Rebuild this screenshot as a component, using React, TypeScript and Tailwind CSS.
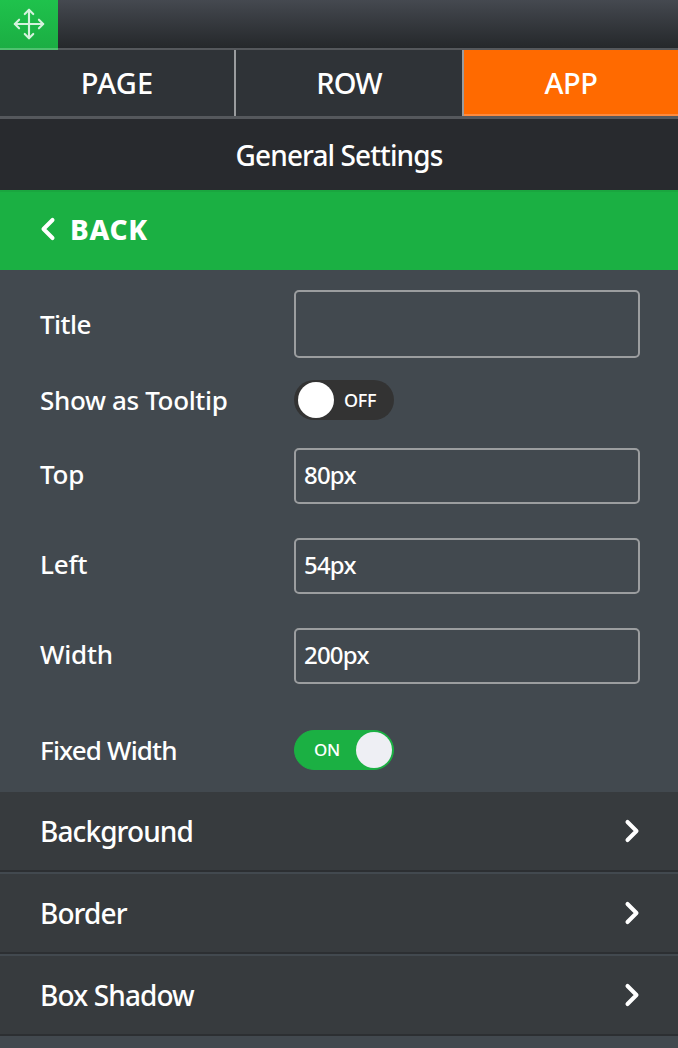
import { ChevronLeft, ChevronRight, Move } from "lucide-react";

const font = "font-['Noto_Sans','Liberation_Sans',sans-serif]";

function Label({ children, className = "tracking-[-0.55px]" }: { children: string; className?: string }) {
  return <div className={`w-[254px] text-[26px] leading-none font-medium text-white ${className}`}>{children}</div>;
}

function Field({ label, value, className }: { label: string; value: string; className: string }) {
  return (
    <div className={`flex items-center ${className}`}>
      <Label className="pb-[4px] tracking-[-0.2px]">{label}</Label>
      <input
        readOnly
        value={value}
        className="h-[56px] w-[346px] rounded-[5px] border-2 border-[#9b9d9f] bg-transparent px-[8px] pb-[3px] text-[24px] font-medium tracking-[-0.8px] text-white outline-none"
      />
    </div>
  );
}

function Row({ label }: { label: string }) {
  return (
    <div className="mb-[2px] flex h-[80px] items-center justify-between border-b-2 border-b-[#2c2f32] bg-[#373b3e] pr-[28px] pl-[40px]">
      <span className="text-[28px] font-medium tracking-[-0.9px] text-white">{label}</span>
      <ChevronRight size={36} strokeWidth={2.7} className="text-white" />
    </div>
  );
}

export default function App() {
  return (
    <div className={`flex h-[1048px] w-[678px] flex-col overflow-hidden bg-[#42494f] ${font}`}>
      {/* top bar */}
      <div className="h-[50px] border-b-2 border-b-[#55585c] bg-gradient-to-b from-[#454950] to-[#25282b]">
        <div className="flex h-[50px] w-[58px] items-center justify-center border-b-2 border-b-[#4fc26f] bg-gradient-to-b from-[#1fc24c] to-[#1bae43] pb-[1px]">
          <Move size={34} strokeWidth={1.5} className="text-[#d5f2dd]" />
        </div>
      </div>

      {/* tabs */}
      <div className="flex h-[69px] border-b-[3px] border-b-[#55585c] bg-[#2f3337] text-[29px] font-medium text-white">
        <div className="flex w-[236px] items-center justify-center border-r-2 border-r-[#9a9c9e] tracking-[0.1px]">PAGE</div>
        <div className="flex w-[228px] items-center justify-center border-r-2 border-r-[#9a9c9e] tracking-[-0.8px]">ROW</div>
        <div className="flex flex-1 items-center justify-center bg-[#ff6a00] tracking-[-0.5px] shadow-[inset_0_-2px_0_#ff8a3c]">APP</div>
      </div>

      <div className="flex h-[71px] items-center justify-center bg-[#282a2e] text-[28px] font-medium tracking-[-0.9px] text-white">
        General Settings
      </div>

      {/* back */}
      <div className="flex h-[80px] items-center gap-[4px] border-t-2 border-t-[#1aa63f] bg-[#1bb043] pb-[5px] pl-[30px] text-white">
        <ChevronLeft size={36} strokeWidth={2.7} />
        <span className="text-[28px] font-extrabold tracking-[0.7px]">BACK</span>
      </div>

      {/* form */}
      <div className="h-[522px] pt-[20px] pl-[40px]">
        <div className="flex items-center">
          <Label>Title</Label>
          <div className="h-[68px] w-[346px] rounded-[5px] border-2 border-[#9b9d9f]" />
        </div>

        <div className="mt-[22px] flex items-center">
          <Label className="tracking-[-0.35px]">Show as Tooltip</Label>
          <div className="flex h-[40px] w-[100px] items-center rounded-full bg-[#333333] pl-[4px]">
            <div className="h-[36px] w-[36px] rounded-full bg-white" />
            <span className="ml-[10px] text-[18px] font-medium tracking-[-0.3px] text-white">OFF</span>
          </div>
        </div>

        <Field label="Top" value="80px" className="mt-[28px]" />
        <Field label="Left" value="54px" className="mt-[34px]" />
        <Field label="Width" value="200px" className="mt-[34px]" />

        <div className="mt-[46px] flex items-center">
          <Label className="tracking-[-0.85px]">Fixed Width</Label>
          <div className="flex h-[40px] w-[100px] items-center justify-between rounded-full border border-[#1bb043] bg-[#1bb043] pr-[1px] pl-[19px]">
            <span className="text-[17px] font-medium tracking-[-0.3px] text-white">ON</span>
            <div className="h-[36px] w-[36px] rounded-full bg-[#eeeff4]" />
          </div>
        </div>
      </div>

      {/* accordion */}
      <Row label="Background" />
      <Row label="Border" />
      <Row label="Box Shadow" />
    </div>
  );
}
